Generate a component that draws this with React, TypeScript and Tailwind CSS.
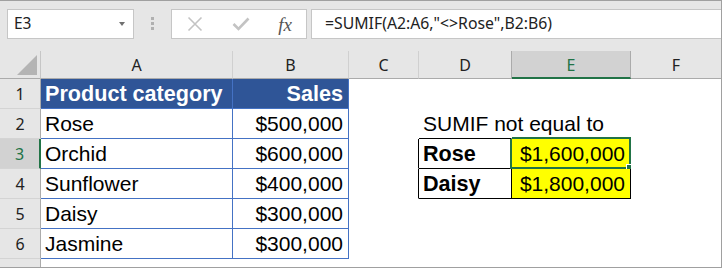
import React from 'react';

type CellSpec = {
  text?: string;
  right?: boolean;
  bold?: boolean;
  fill?: string;
  ink?: string;
  r?: string;
  b?: string;
  selected?: boolean;
  spill?: boolean;
};

const COLS = ['w-[192px]', 'w-[116px]', 'w-[70px]', 'w-[93px]', 'w-[119px]', 'flex-1'];
const LETTERS = ['A', 'B', 'C', 'D', 'E', 'F'];

const BLUE_R = 'border-r-[#4472c4]';
const BLUE_B = 'border-b-[#4472c4]';
const BLACK_R = 'border-r-black';
const BLACK_B = 'border-b-black';

const item = (name: string, sales: string): CellSpec[] => [
  { text: name, r: BLUE_R, b: BLUE_B },
  { text: sales, right: true, r: BLUE_R, b: BLUE_B },
];

const ROWS: CellSpec[][] = [
  [
    { text: 'Product category', bold: true, fill: 'bg-[#2f5597]', ink: 'text-white', r: BLUE_R, b: BLUE_B },
    { text: 'Sales', right: true, bold: true, fill: 'bg-[#2f5597]', ink: 'text-white', r: BLUE_R, b: BLUE_B },
    {}, {}, {}, {},
  ],
  [...item('Rose', '$500,000'), {}, { text: 'SUMIF not equal to', b: BLACK_B, spill: true }, { b: BLACK_B }, {}],
  [
    ...item('Orchid', '$600,000'),
    { r: BLACK_R },
    { text: 'Rose', bold: true, r: BLACK_R, b: BLACK_B },
    { text: '$1,600,000', right: true, fill: 'bg-[#ffff00]', r: BLACK_R, b: BLACK_B, selected: true },
    {},
  ],
  [
    ...item('Sunflower', '$400,000'),
    { r: BLACK_R },
    { text: 'Daisy', bold: true, r: BLACK_R, b: BLACK_B },
    { text: '$1,800,000', right: true, fill: 'bg-[#ffff00]', r: BLACK_R, b: BLACK_B },
    {},
  ],
  [...item('Daisy', '$300,000'), {}, {}, {}, {}],
  [...item('Jasmine', '$300,000'), {}, {}, {}, {}],
];

const Cell: React.FC<{ spec: CellSpec; width: string }> = ({ spec, width }) => (
  <div
    className={`relative ${spec.spill ? 'z-10' : ''} ${width} shrink-0 h-full border-r border-b ${spec.r ?? 'border-r-transparent'} ${spec.b ?? 'border-b-transparent'} ${spec.fill ?? 'bg-white'} ${spec.ink ?? 'text-black'} ${spec.bold ? 'font-bold text-[21.6px]' : 'font-normal text-[21px]'} ${spec.right ? 'text-right pr-[5px]' : 'text-left pl-[4px]'} leading-[29px] whitespace-nowrap`}
  >
    {spec.text}
    {spec.selected && (
      <div className="absolute -left-[2px] -top-[2px] -right-px -bottom-px border-2 border-[#217346] pointer-events-none">
        <div className="absolute -right-[4px] -bottom-[4px] w-[7px] h-[7px] bg-[#217346] border border-white" />
      </div>
    )}
  </div>
);

const RowHeader: React.FC<{ n: number; active?: boolean }> = ({ n, active }) => (
  <div
    className={`w-[41px] shrink-0 h-full flex items-center justify-center border-b border-b-[#d4d4d4] font-['Noto_Sans',sans-serif] text-[16px] ${
      active ? 'bg-[#d2d2d2] border-r-2 border-r-[#217346] text-[#217346]' : 'bg-[#e6e6e6] border-r border-r-[#ababab] text-[#222]'
    }`}
  >
    {n}
  </div>
);

export default function App() {
  return (
    <div className="w-[722px] h-[268px] overflow-hidden bg-[#e6e6e6] border-t border-r border-b border-[#a0a0a0] font-['Liberation_Sans',Arial,sans-serif]">
      {/* formula bar */}
      <div className="h-[50px] flex items-start pt-[8px] pl-[7px]">
        <div className="w-[127px] h-[30px] bg-white border border-[#c6c6c6] flex items-center justify-between pl-[6px] pr-[8px]">
          <span className="font-['Noto_Sans',sans-serif] text-[15.5px] text-[#222]">E3</span>
          <span className="w-0 h-0 border-l-[3px] border-r-[3px] border-t-[4px] border-l-transparent border-r-transparent border-t-[#707070]" />
        </div>
        <div className="ml-[17px] mt-[8px] flex flex-col gap-[2px]">
          <span className="w-[3px] h-[3px] bg-[#b0b0b0]" />
          <span className="w-[3px] h-[3px] bg-[#b0b0b0]" />
          <span className="w-[3px] h-[3px] bg-[#b0b0b0]" />
        </div>
        <div className="ml-[17px] w-[136px] h-[30px] bg-white border border-[#c6c6c6] flex items-center">
          <span className="w-[46px] flex justify-center">
            <svg width="16" height="16" viewBox="0 0 16 16">
              <path d="M1.5 1.5 L14.5 14.5 M14.5 1.5 L1.5 14.5" stroke="#c3c3c3" strokeWidth="1.6" fill="none" />
            </svg>
          </span>
          <span className="w-[46px] flex justify-center">
            <svg width="18" height="14" viewBox="0 0 18 14">
              <path d="M1.5 7 L6.5 12 L16.5 1.5" stroke="#c3c3c3" strokeWidth="2.6" fill="none" />
            </svg>
          </span>
          <span className="w-[42px] flex justify-center font-['Liberation_Serif',serif] italic text-[19px] text-[#555] leading-none">
            fx
          </span>
        </div>
        <div className="ml-[4px] flex-1 h-[30px] bg-white border-t border-b border-l border-[#c6c6c6] flex items-center pl-[13px] font-['Noto_Sans',sans-serif] text-[15.8px] text-[#222] whitespace-nowrap">
          =SUMIF(A2:A6,"&lt;&gt;Rose",B2:B6)
        </div>
      </div>

      {/* column headers */}
      <div className="h-[28px] flex font-['Noto_Sans',sans-serif] text-[16px] text-[#222]">
        <div className="w-[41px] shrink-0 border-r border-b border-r-[#c6c6c6] border-b-[#ababab] flex items-end justify-end pr-[3px] pb-[3px]">
          <svg width="20" height="20" viewBox="0 0 20 20">
            <path d="M20 0 L20 20 L0 20 Z" fill="#b4b4b4" />
          </svg>
        </div>
        {LETTERS.map((l, i) =>
          l === 'E' ? (
            <div
              key={l}
              className={`${COLS[i]} shrink-0 bg-[#d2d2d2] border-r border-r-[#ababab] border-b-2 border-b-[#217346] text-[#217346] flex items-center justify-center pt-[2px]`}
            >
              {l}
            </div>
          ) : (
            <div
              key={l}
              className={`${COLS[i]} shrink-0 border-b border-b-[#ababab] ${
                l === 'D' ? 'border-r border-r-[#ababab]' : l === 'F' ? '' : 'border-r border-r-[#d0d0d0]'
              } flex items-center justify-center pt-[1px]`}
            >
              {l}
            </div>
          )
        )}
      </div>

      {/* grid */}
      {ROWS.map((row, ri) => (
        <div key={ri} className="h-[30px] flex">
          <RowHeader n={ri + 1} active={ri === 2} />
          {row.map((c, ci) => (
            <Cell key={ci} spec={c} width={COLS[ci]} />
          ))}
        </div>
      ))}
      <div className="h-[8px] flex">
        <div className="w-[41px] shrink-0 h-full bg-[#e6e6e6] border-r border-r-[#ababab]" />
        <div className="flex-1 bg-white" />
      </div>
    </div>
  );
}
